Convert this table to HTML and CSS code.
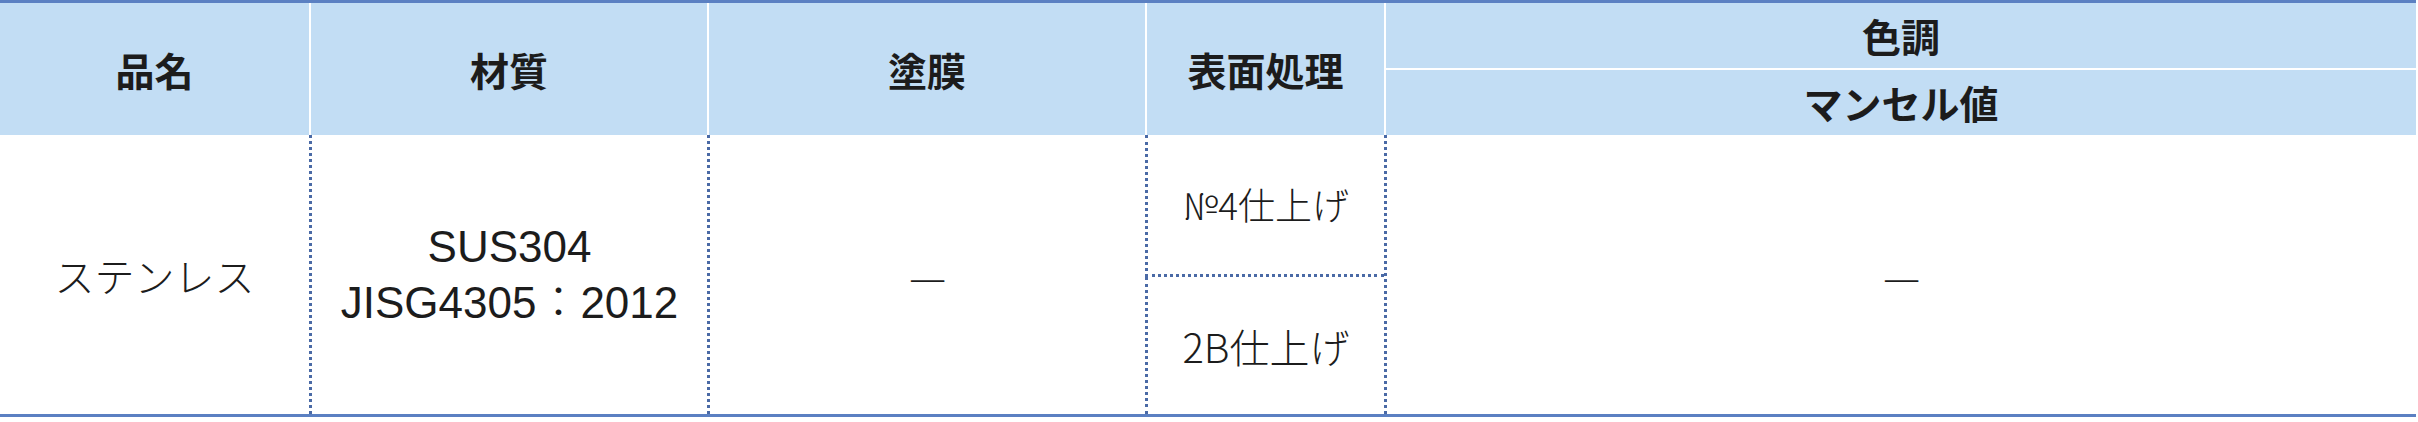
FILE: index.html
```html
<!DOCTYPE html>
<html lang="ja">
<head>
<meta charset="utf-8">
<title>仕様表</title>
<link rel="stylesheet" href="styles.css">
</head>
<body>
<table class="spec">
  <colgroup>
    <col class="c1"><col class="c2"><col class="c3"><col class="c4"><col class="c5">
  </colgroup>
  <thead>
    <tr class="h1">
      <th rowspan="2">品名</th>
      <th rowspan="2" class="sep">材質</th>
      <th rowspan="2" class="sep">塗膜</th>
      <th rowspan="2" class="sep">表面処理</th>
      <th class="sep top">色調</th>
    </tr>
    <tr class="h2">
      <th class="sep">マンセル値</th>
    </tr>
  </thead>
  <tbody>
    <tr class="b1">
      <td rowspan="2">ステンレス</td>
      <td rowspan="2" class="dot latin"><span class="line">SUS304</span><span class="line">JISG4305：2012</span></td>
      <td rowspan="2" class="dot dash">—</td>
      <td class="dot sub small">№4仕上げ</td>
      <td rowspan="2" class="dot dash">—</td>
    </tr>
    <tr class="b2">
      <td class="dot">2B仕上げ</td>
    </tr>
  </tbody>
</table>
</body>
</html>
```
FILE: styles.css
```css
html, body {
  margin: 0;
  padding: 0;
  background: #ffffff;
}
body {
  font-family: "Noto Sans CJK JP", "Noto Sans", sans-serif;
  color: #1c1c1c;
}
.spec {
  width: 2416px;
  table-layout: fixed;
  border-collapse: separate;
  border-spacing: 0;
  border-top: 3px solid #5b80c2;
  border-bottom: 3px solid #5b80c2;
}
.c1 { width: 309px; }
.c2 { width: 398px; }
.c3 { width: 438px; }
.c4 { width: 239px; }
.c5 { width: 1032px; }
th, td {
  padding: 0;
  text-align: center;
  vertical-align: middle;
}
th {
  background: #c2ddf4;
  font-weight: 700;
  font-size: 39px;
  line-height: 1;
}
th.sep { border-left: 2px solid #ffffff; }
th.top { border-bottom: 2px solid #ffffff; }
.h1 { height: 67px; }
.h2 { height: 65px; }
td {
  font-size: 40px;
  font-weight: 300;
  line-height: 1;
}
td.dot { border-left: 3px dotted #4a6aa6; }
td.sub { border-bottom: 3px dotted #4a6aa6; }
td.latin {
  font-family: "Liberation Sans", "Noto Sans CJK JP", sans-serif;
  font-size: 44px;
}
.line {
  display: block;
  height: 56px;
  line-height: 56px;
}
td.small { font-size: 37px; }
td.dash { font-size: 42px; }
.b1 { height: 142px; }
.b2 { height: 137px; }
```
